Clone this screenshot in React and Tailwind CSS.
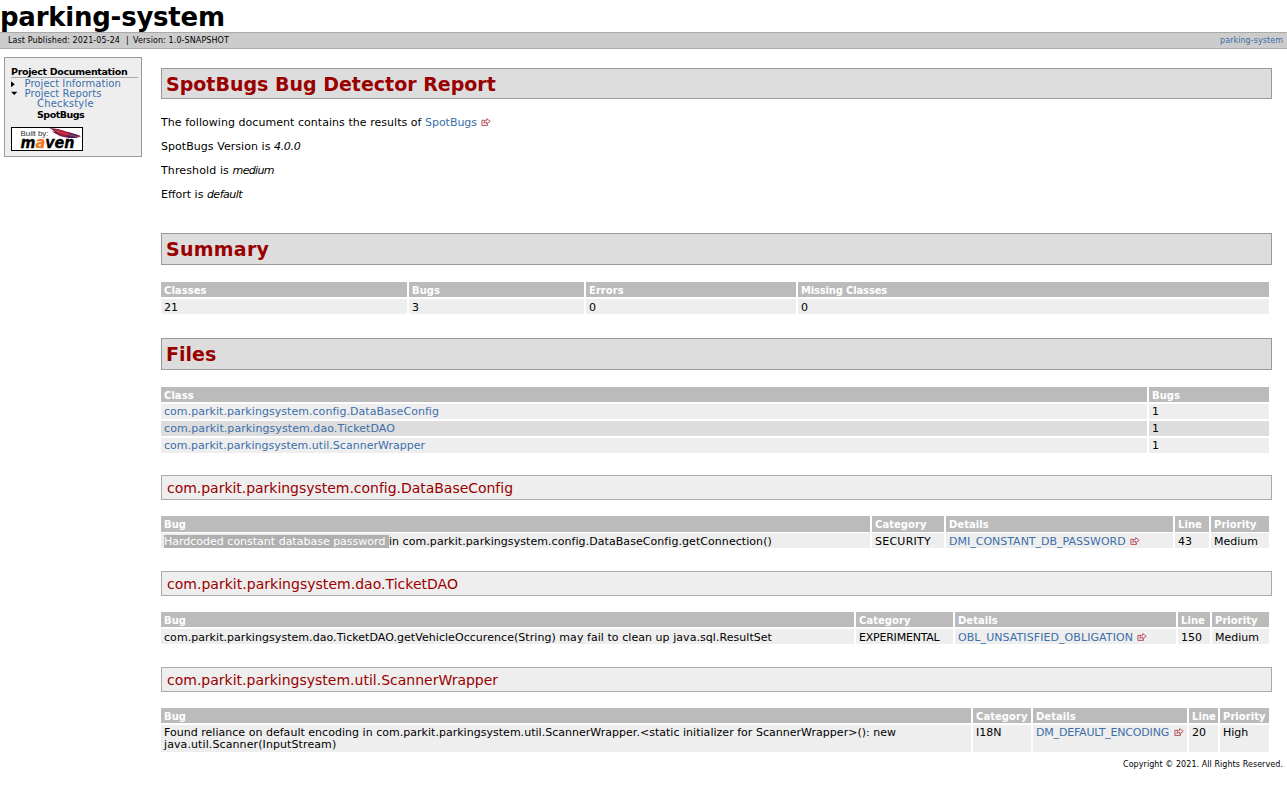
function ExternalIcon({ className = '' }) {
  return (
    <svg viewBox="0 0 10 8" className={'relative -top-px inline-block h-2 w-[10px] shrink-0 ' + className} fill="none" stroke="#b0404a" strokeWidth="0.9">
      <path d="M4 2.3H0.9V7.4H6.4V5.8" />
      <path d="M3 5.4C3 3.4 4 2.4 5.7 2.3V0.7L9.2 3.3L5.7 5.8V4.2C4.6 4.2 3.6 4.5 3 5.4Z" fill="#fff" />
    </svg>
  );
}

function Link({ children, className = '' }) {
  return <a href="#" className={'text-[#3c6eaa] ' + className}>{children}</a>;
}

function SectionTitle({ children, className = '' }) {
  return (
    <h2 className={'flex items-center border border-[#999] bg-[#ddd] pl-1 text-[19px] leading-none font-bold text-[#900] ' + className}>
      {children}
    </h2>
  );
}

function ClassTitle({ children, className = '' }) {
  return (
    <h3 className={'flex h-[25px] items-center border border-[#aaa] bg-[#eee] pl-[5px] text-[14px] leading-none text-[#900] ' + className}>
      {children}
    </h3>
  );
}

function HeaderRow({ cols, labels, height = 'h-[15px]' }) {
  return (
    <div className={'grid gap-x-[2px] ' + cols}>
      {labels.map((label) => (
        <div key={label} className={'flex items-center overflow-hidden bg-[#bbb] pt-[2px] pl-[3px] text-[10px] leading-none font-bold whitespace-nowrap text-white ' + height + (label === 'Missing Classes' ? ' tracking-[-0.17px]' : ' tracking-[0.05px]')}>
          {label}
        </div>
      ))}
    </div>
  );
}

function Row({ cols, cells, className = 'h-[15px]', bg = 'bg-[#eee]' }) {
  return (
    <div className={'grid gap-x-[2px] ' + cols}>
      {cells.map((cell, i) => (
        <div key={i} className={'pl-[3px] text-[11px] leading-[12px] whitespace-nowrap ' + bg + ' ' + className}>
          {cell}
        </div>
      ))}
    </div>
  );
}

const SUMMARY = 'grid-cols-[246px_175px_210px_471px]';
const FILES = 'grid-cols-[986px_120px]';
const CONFIG = 'grid-cols-[709px_72px_227px_34px_58px]';
const TICKET = 'grid-cols-[693px_97px_221px_32px_57px]';
const SCANNER = 'grid-cols-[810px_58px_154px_29px_49px]';
const BUG_LABELS = ['Bug', 'Category', 'Details', 'Line', 'Priority'];

function MavenBadge() {
  return (
    <svg viewBox="0 0 72 24" className="block h-6 w-[72px]">
      <rect x="0.5" y="0.5" width="71" height="23" fill="#fff" stroke="#000" />
      <text x="9.5" y="8.6" fontSize="8" fontFamily="Liberation Sans, sans-serif" textLength="28" fill="#333">Built by:</text>
      <path d="M38.5 1.2C44 1 50 2.4 55 4.4C61 6 66 7 69.5 9C67 11.4 60 11.6 54 10.2C48 9.4 44 6 41 4.5L44 4.6Z" fill="#6c1c50" />
      <path d="M42 2C49 2.2 55 5 61 7L53 8.8C48 7.6 45.5 4.6 42 2Z" fill="#b81e3c" />
      <path d="M57 6.2C62 7 66 8 69.5 9.2C66 11 62 11 58 10.4Z" fill="#4c2060" />
      <path d="M44 3.4C52 6.5 60 8.8 70 10" fill="none" stroke="#e8743b" strokeWidth="0.5" />
      <text x="9.5" y="20.6" fontSize="15.5" fontWeight="bold" fontStyle="italic" fontFamily="DejaVu Sans, sans-serif" textLength="54" lengthAdjust="spacingAndGlyphs" fill="#000" stroke="#000" strokeWidth="0.3">m<tspan fill="#f07820" stroke="#f07820">a</tspan>ven</text>
    </svg>
  );
}

export default function App() {
  return (
    <div className="h-[793px] overflow-hidden bg-white font-['DejaVu_Sans',sans-serif] text-[11px] text-black">
      <header className="flex h-8 items-center">
        <h1 className="pt-px text-[26px] leading-8 font-bold tracking-[-0.24px]">parking-system</h1>
      </header>
      <div className="flex h-[17px] items-center justify-between border-y border-[#aaa] bg-[#ccc] pr-1 pl-2 text-[8px] leading-none">
        <div className="flex whitespace-pre">
          <span className="w-[118px] tracking-[0.1px]">Last Published: 2021-05-24</span>
          <span className="w-[7px]">|</span>
          <span className="tracking-[0.1px]">Version: 1.0-SNAPSHOT</span>
        </div>
        <Link className="tracking-[0.06px]">parking-system</Link>
      </div>

      <div className="flex items-start">
        <nav className="mt-2 ml-1 h-[100px] w-[138px] border border-[#999] bg-[#eee] pt-2 pl-[6px] text-[10px] leading-[10px]">
          <h5 className="mr-[3px] h-[12px] border-b border-[#aaa] text-[9.5px] leading-[12px] font-bold tracking-[-0.33px]">Project Documentation</h5>
          <ul className="pt-px">
            <li className="flex h-[10px] items-center">
              <svg viewBox="0 0 13 10" className="h-[10px] w-[13px] shrink-0"><path d="M0 2.2V8.2L3.8 5.2Z" /></svg>
              <Link className="pl-[0.5px] tracking-[0.06px]">Project Information</Link>
            </li>
            <li className="flex h-[10px] items-center">
              <svg viewBox="0 0 13 10" className="h-[10px] w-[13px] shrink-0"><path d="M0 2.8H6.4L3.2 6Z" /></svg>
              <Link className="pl-[0.5px] tracking-[0.09px]">Project Reports</Link>
            </li>
            <li className="h-[10px] pl-[26px]"><Link className="tracking-[0.2px]">Checkstyle</Link></li>
            <li className="h-[12px] pl-[26px] text-[9.5px] leading-[12px] font-bold tracking-[-0.5px]">SpotBugs</li>
          </ul>
          <div className="mt-[6px]"><MavenBadge /></div>
        </nav>

        <main className="mt-[19px] ml-[19px] w-[1111px]">
          <SectionTitle className="h-[31px] pt-px">SpotBugs Bug Detector Report</SectionTitle>
          <div className="mt-3 leading-6 whitespace-pre">
            <p className="flex items-center"><span className="tracking-[0.045px]">The following document contains the results of </span><Link className="tracking-[-0.05px]">SpotBugs</Link><ExternalIcon className="ml-1" /></p>
            <p className="tracking-[0.05px]">SpotBugs Version is <i className="tracking-[-0.3px]">4.0.0</i></p>
            <p className="tracking-[0.12px]">Threshold is <i className="tracking-[-0.65px]">medium</i></p>
            <p>Effort is <i className="tracking-[-0.5px]">default</i></p>
          </div>

          <SectionTitle className="mt-[26px] h-8 tracking-[0.25px]">Summary</SectionTitle>
          <div className="mt-[17px] flex flex-col gap-[2px]">
            <HeaderRow cols={SUMMARY} labels={['Classes', 'Bugs', 'Errors', 'Missing Classes']} />
            <Row cols={SUMMARY} className="h-[15px] pt-[3px]" cells={['21', '3', '0', '0']} />
          </div>

          <SectionTitle className="mt-6 h-8">Files</SectionTitle>
          <div className="mt-[17px] flex flex-col gap-[2px]">
            <HeaderRow cols={FILES} labels={['Class', 'Bugs']} />
            <Row cols={FILES} className="h-[15px] pt-[2px]" cells={[<Link className="tracking-[0.046px]">com.parkit.parkingsystem.config.DataBaseConfig</Link>, '1']} />
            <Row cols={FILES} className="h-[15px] pt-[2px]" bg="bg-[#ddd]" cells={[<Link className="tracking-[0.08px]">com.parkit.parkingsystem.dao.TicketDAO</Link>, '1']} />
            <Row cols={FILES} className="h-[15px] pt-[2px]" cells={[<Link className="tracking-[0.02px]">com.parkit.parkingsystem.util.ScannerWrapper</Link>, '1']} />
          </div>

          <ClassTitle className="mt-[22px] tracking-[-0.028px]">com.parkit.parkingsystem.config.DataBaseConfig</ClassTitle>
          <div className="mt-4 flex flex-col gap-px">
            <HeaderRow cols={CONFIG} labels={BUG_LABELS} height="h-4" />
            <Row
              cols={CONFIG}
              className="h-[15px] pt-[3px]"
              cells={[
                <span className="flex whitespace-pre"><span className="-mt-px h-[13px] bg-[#b0b0b0] pt-px text-white">Hardcoded constant database password </span><span className="tracking-[0.065px]">in com.parkit.parkingsystem.config.DataBaseConfig.getConnection()</span></span>,
                <span className="tracking-[0.25px]">SECURITY</span>,
                <span className="flex items-center"><Link>DMI_CONSTANT_DB_PASSWORD</Link><ExternalIcon className="ml-1" /></span>,
                '43',
                'Medium',
              ]}
            />
          </div>

          <ClassTitle className="mt-[23px] tracking-[0.024px]">com.parkit.parkingsystem.dao.TicketDAO</ClassTitle>
          <div className="mt-4 flex flex-col gap-[2px]">
            <HeaderRow cols={TICKET} labels={BUG_LABELS} />
            <Row
              cols={TICKET}
              className="h-[15px] pt-[3px]"
              cells={[
                <span className="tracking-[0.052px]">com.parkit.parkingsystem.dao.TicketDAO.getVehicleOccurence(String) may fail to clean up java.sql.ResultSet</span>,
                <span className="tracking-[-0.22px]">EXPERIMENTAL</span>,
                <span className="flex items-center"><Link className="tracking-[0.076px]">OBL_UNSATISFIED_OBLIGATION</Link><ExternalIcon className="ml-1" /></span>,
                '150',
                'Medium',
              ]}
            />
          </div>

          <ClassTitle className="mt-[23px]">com.parkit.parkingsystem.util.ScannerWrapper</ClassTitle>
          <div className="mt-4 flex flex-col gap-[2px]">
            <HeaderRow cols={SCANNER} labels={BUG_LABELS} />
            <Row
              cols={SCANNER}
              className="h-[27px] pt-[2px]"
              cells={[
                <span><span className="tracking-[0.025px]">{'Found reliance on default encoding in com.parkit.parkingsystem.util.ScannerWrapper.<static initializer for ScannerWrapper>(): new'}</span><br /><span className="tracking-[0.1px]">java.util.Scanner(InputStream)</span></span>,
                'I18N',
                <span className="flex items-center"><Link className="tracking-[-0.189px]">DM_DEFAULT_ENCODING</Link><ExternalIcon className="ml-[5px]" /></span>,
                '20',
                'High',
              ]}
            />
          </div>
        </main>
      </div>
      <footer className="pt-[8px] pr-1 text-right text-[8px] leading-[10px] tracking-[0.062px]">Copyright © 2021. All Rights Reserved.</footer>
    </div>
  );
}
